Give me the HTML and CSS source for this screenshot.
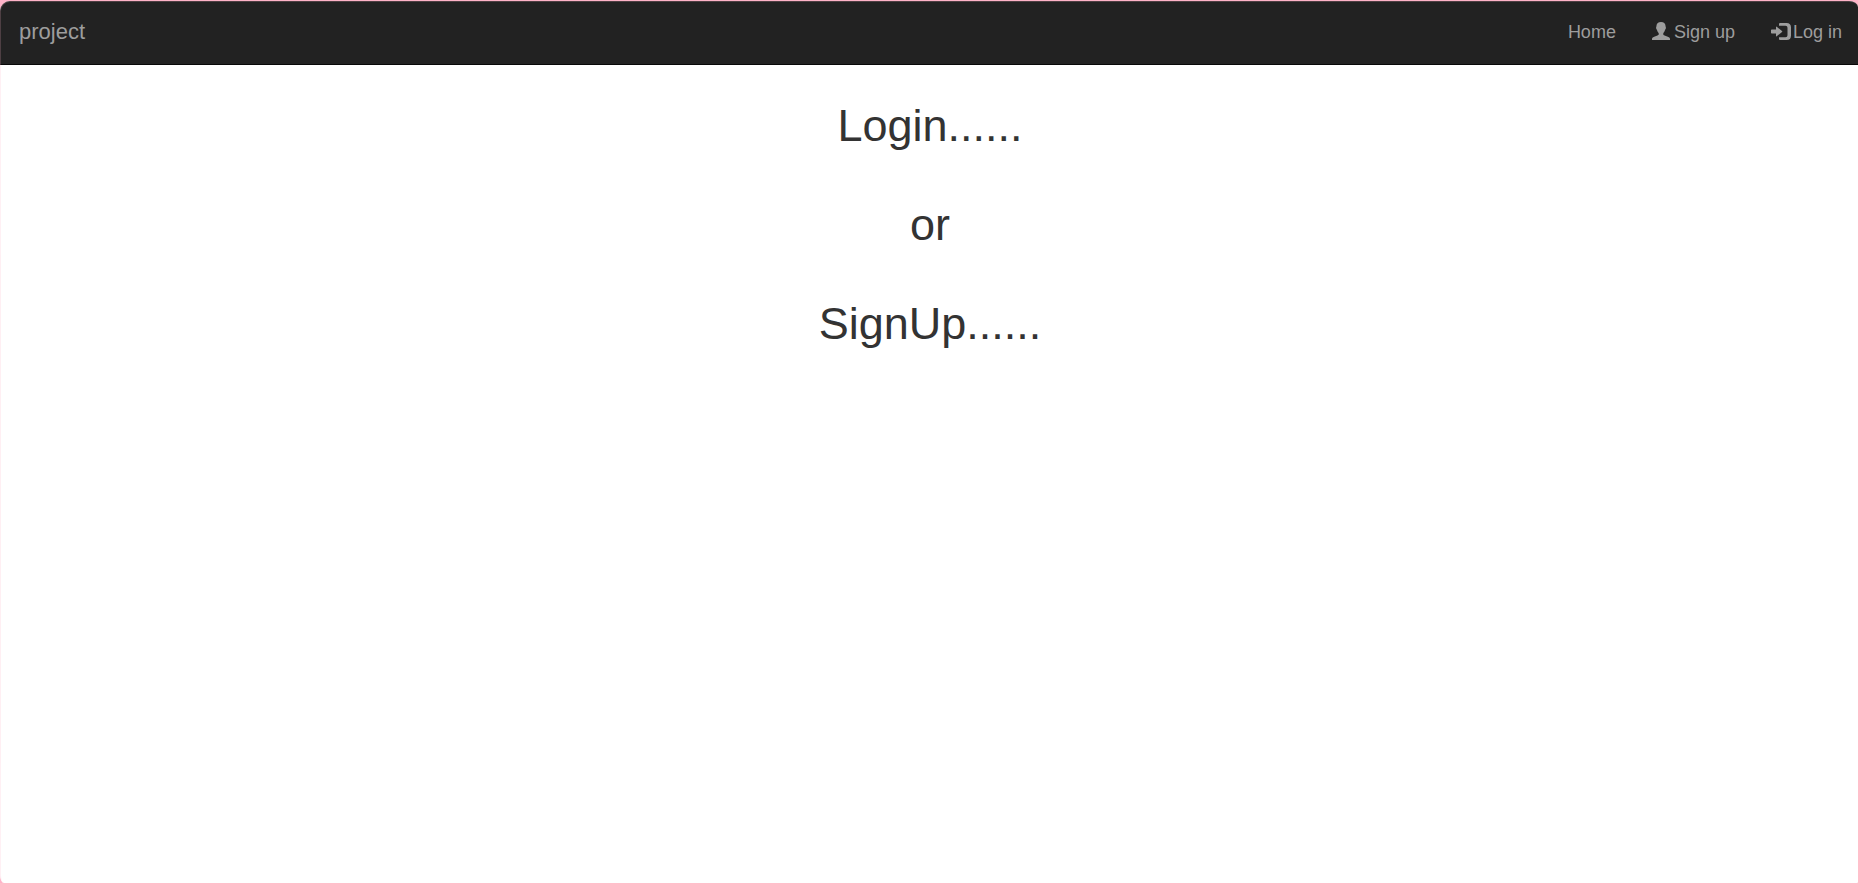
FILE: index.html
```html
<!DOCTYPE html>
<html lang="en">
<head>
<meta charset="utf-8">
<title>project</title>
<link rel="stylesheet" href="styles.css">
</head>
<body>
<div class="window">
  <nav class="navbar">
    <a class="brand" href="#">project</a>
    <ul class="nav">
      <li><a href="#">Home</a></li>
      <li><a href="#"><svg class="icon" viewBox="0 0 18 18" aria-hidden="true"><path d="M9 0C6.300 0 4.400 1.500 4.400 4.200C4.400 5 4 5.100 4.100 5.900C4.200 6.900 4.700 7.200 5 8C5.400 9.400 5.900 10.200 6.700 11V12.200C6.700 12.800 6.300 13 5.400 13.400L1.600 14.900C.500 15.400 0 15.900 0 17V18H18V17C18 15.900 17.500 15.400 16.400 14.900L12.600 13.400C11.700 13 11.300 12.800 11.300 12.200V11C12.100 10.200 12.600 9.400 13 8C13.300 7.200 13.800 6.900 13.900 5.900C14 5.100 13.600 5 13.600 4.200C13.600 1.500 11.700 0 9 0Z"/></svg>Sign up</a></li>
      <li><a href="#"><svg class="icon icon-login" viewBox="0 0 20 18" aria-hidden="true"><path d="M8 1Q8 0 9 0H15.500Q20 0 20 4.500V12.500Q20 17 15.500 17H9Q8 17 8 16V14.300H14.500Q16.500 14.300 16.500 12.300V4.700Q16.500 2.700 14.500 2.700H8Z"/><path d="M5 3.900Q5 3.200 5.700 3.700L11 8Q11.600 8.500 11 9L5.700 13.300Q5 13.800 5 13.100V10.500H.700Q0 10.500 0 9.800V7.200Q0 6.500.700 6.500H5Z"/></svg>Log in</a></li>
    </ul>
  </nav>
  <main class="content">
    <h1>Login......</h1>
    <h1>or</h1>
    <h1>SignUp......</h1>
  </main>
</div>
</body>
</html>
```
FILE: styles.css
```css
* { box-sizing: border-box; }

body {
  margin: 0;
  padding-top: 1px;
  min-height: 100vh;
  display: flex;
  background: #ffb3c8;
  color: #333;
  font-family: "Helvetica Neue", Helvetica, Arial, "Liberation Sans", sans-serif;
}

.window {
  position: relative;
  flex: 1;
  overflow: hidden;
  background: #fff;
  border-radius: 10px 9px 1px 4px / 10px 6px 1px 8px;
}

/* Translucent edge of the window */
.window::after {
  content: "";
  position: absolute;
  inset: 0;
  border-left: 1px solid rgba(255, 179, 200, 0.2);
  border-top: 1px solid rgba(255, 179, 200, 0.2);
  border-radius: inherit;
  pointer-events: none;
}

.navbar {
  display: flex;
  justify-content: space-between;
  align-items: center;
  height: 64px;
  padding: 0 16px 2px 19px;
  background: #222;
  border-bottom: 1px solid #080808;
}

.navbar a {
  color: #9d9d9d;
  text-decoration: none;
}

.brand {
  font-size: 22px;
  line-height: 24px;
}

.nav {
  display: flex;
  gap: 36px;
  margin: 0;
  padding: 0;
  list-style: none;
  font-size: 18px;
  line-height: 24px;
}

.nav a {
  display: flex;
  align-items: center;
}

.icon {
  width: 18px;
  height: 18px;
  margin: 0 4px 2px 0;
  fill: currentColor;
}

.icon-login {
  width: 20px;
  margin: 0 2px 0 0;
}

.content {
  display: flex;
  flex-direction: column;
  gap: 49px;
  padding: 36px 0 0 2px;
}

h1 {
  margin: 0;
  font-size: 45px;
  font-weight: 500;
  line-height: 50px;
  text-align: center;
}
```
